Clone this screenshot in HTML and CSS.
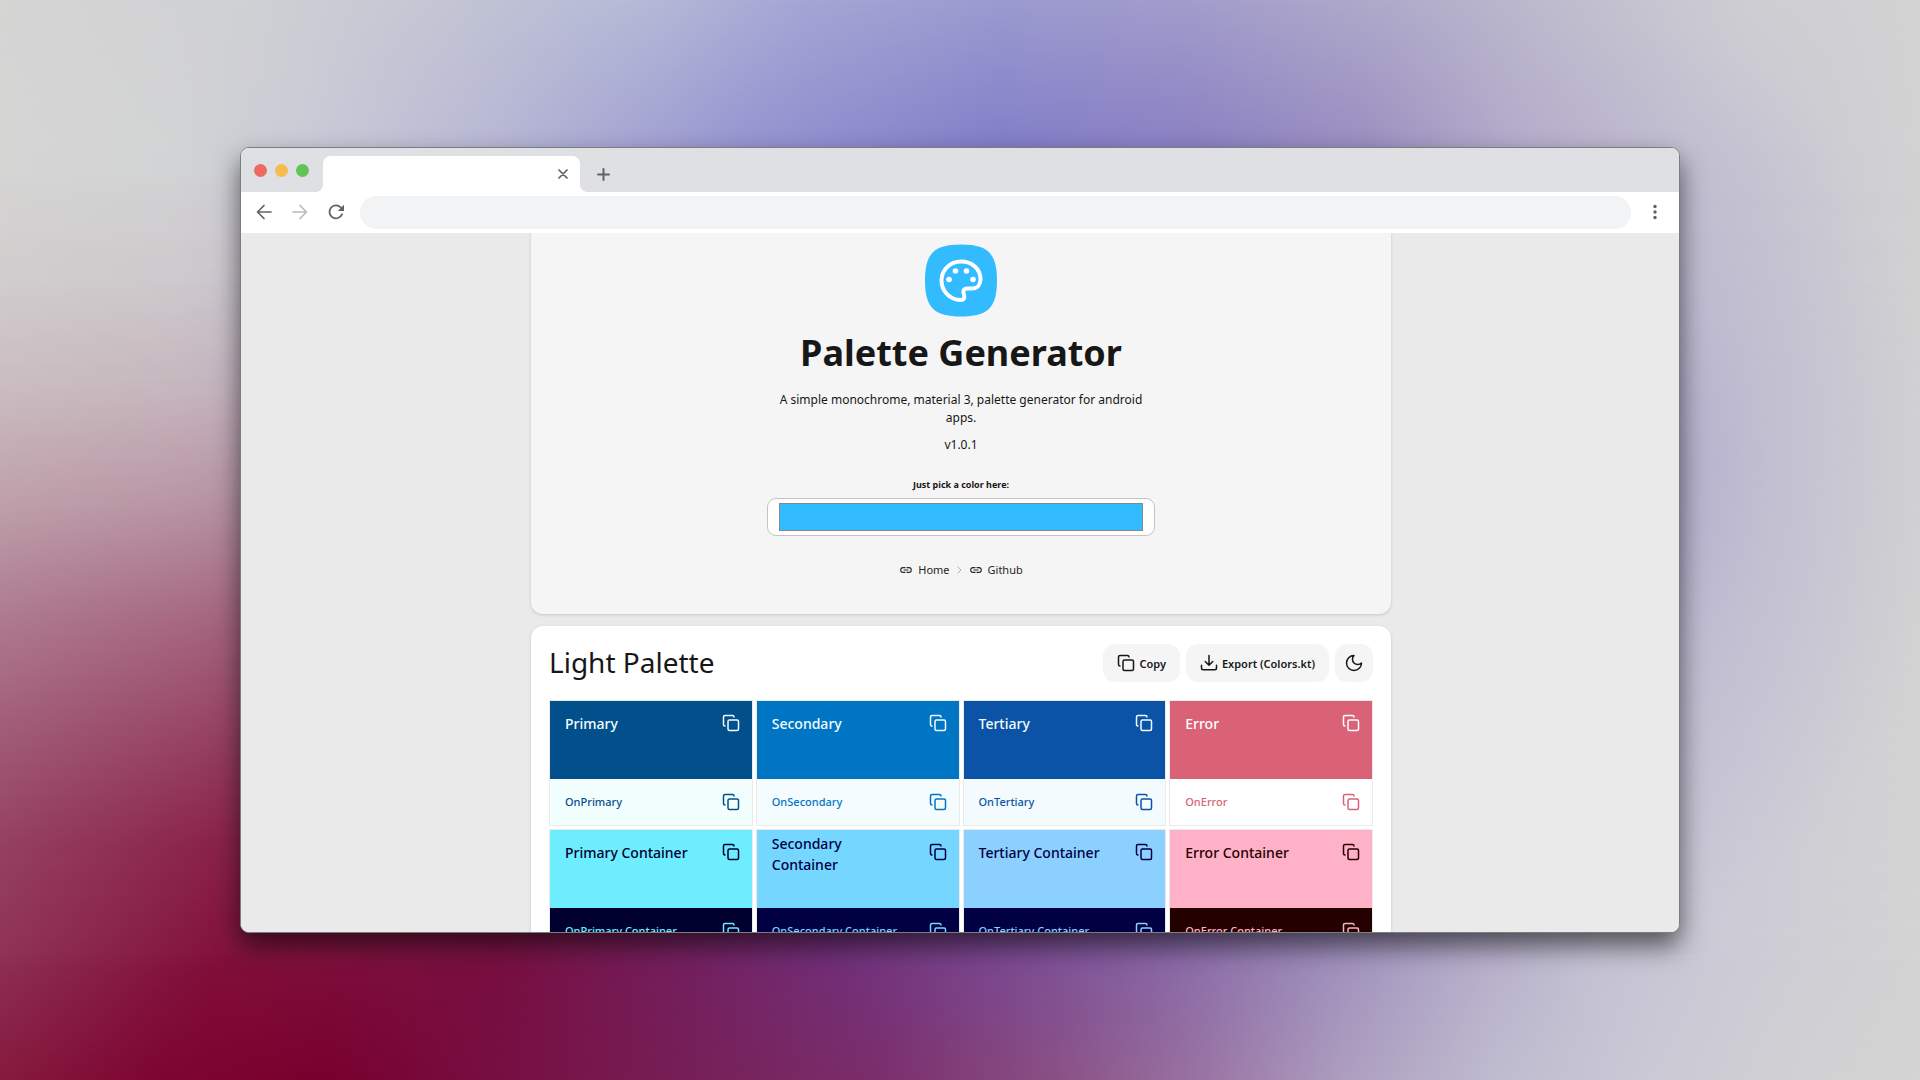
FILE: index.html
```html
<!DOCTYPE html>
<html lang="en">
<head>
<meta charset="utf-8">
<title>Palette Generator</title>
<link rel="stylesheet" href="styles.css">
</head>
<body>
<svg class="symbols" aria-hidden="true">
  <symbol id="copy" viewBox="0 0 24 24"><rect x="8" y="8" width="14" height="14" rx="2"/><path d="M4 16c-1.1 0-2-.9-2-2V4c0-1.1.9-2 2-2h10c1.1 0 2 .9 2 2"/></symbol>
  <symbol id="link" viewBox="0 0 24 24"><path fill="currentColor" d="M3.900 12c0-1.710 1.390-3.100 3.100-3.100h4V7H7a5 5 0 0 0 0 10h4v-1.900H7c-1.710 0-3.100-1.390-3.100-3.100zM8 13h8v-2H8v2zm9-6h-4v1.900h4c1.710 0 3.100 1.390 3.100 3.100s-1.390 3.100-3.100 3.100h-4V17h4a5 5 0 0 0 0-10z"/></symbol>
</svg>
<div class="window">
  <div class="tabstrip">
    <div class="lights"><span class="light red"></span><span class="light amber"></span><span class="light green"></span></div>
    <div class="tab">
      <button class="icon-button" aria-label="Close tab"><svg class="stroke" width="10" height="10" viewBox="0 0 10 10"><path d="M1 1l8 8M9 1L1 9" stroke-width="1.7"/></svg></button>
    </div>
    <button class="icon-button new-tab" aria-label="New tab"><svg class="stroke" width="13" height="13" viewBox="0 0 13 13"><path d="M6.500 1v11M1 6.500h11" stroke-width="2"/></svg></button>
  </div>
  <div class="toolbar">
    <button class="icon-button" aria-label="Back"><svg class="stroke" width="16" height="16" viewBox="0 0 16 16"><path d="M15 8H2M8 1.500L1.500 8 8 14.500" stroke-width="1.7"/></svg></button>
    <button class="icon-button" aria-label="Forward" disabled><svg class="stroke" width="16" height="16" viewBox="0 0 16 16"><path d="M1 8h13M8 1.500L14.500 8 8 14.500" stroke-width="1.7"/></svg></button>
    <button class="icon-button" aria-label="Reload"><svg class="stroke" width="16" height="16" viewBox="0 0 16 16"><path d="M14 10.300A6.500 6.500 0 1 1 12.800 3.500L14 5" stroke-width="1.8"/><path class="solid" d="M16 .8V7H9.800z"/></svg></button>
    <input class="address" type="text" aria-label="Address">
    <button class="icon-button" aria-label="Menu"><svg width="4" height="16" viewBox="0 0 4 16"><g fill="currentColor"><circle cx="2" cy="2.500" r="1.700"/><circle cx="2" cy="8" r="1.700"/><circle cx="2" cy="13.500" r="1.700"/></g></svg></button>
  </div>
  <main class="page">
    <header class="hero">
      <svg class="logo" viewBox="0 0 72 72" aria-hidden="true">
        <path class="logo-shape" d="M36 0C62 0 72 8 72 36S62 72 36 72 0 64 0 36 10 0 36 0z"/>
        <path class="logo-line" d="M36 17C25 17 16.500 25.500 16.500 36S25 55.500 35.500 55.500c3.500 0 4.500-2 3.500-5-1.500-4-.5-6.500 3.500-6.500h5c5 0 8-4 8-9.500C55.500 24.500 47 17 36 17z"/>
        <g class="logo-dots"><circle cx="24" cy="35" r="2.800"/><circle cx="30.500" cy="26.500" r="2.800"/><circle cx="41.500" cy="26.500" r="2.800"/><circle cx="48" cy="35" r="2.800"/></g>
      </svg>
      <h1>Palette Generator</h1>
      <p class="lead">A simple monochrome, material 3, palette generator for android apps.</p>
      <p class="version">v1.0.1</p>
      <div class="picker">
        <label for="color">Just pick a color here:</label>
        <input id="color" type="color" value="#33bbff">
      </div>
      <nav class="links">
        <a href="#home"><svg width="14" height="14"><use href="#link"/></svg>Home</a>
        <svg class="stroke chevron" width="5" height="8" viewBox="0 0 5 8"><path d="M1 1l3 3-3 3"/></svg>
        <a href="#github"><svg width="14" height="14"><use href="#link"/></svg>Github</a>
      </nav>
    </header>
    <section class="card">
      <div class="card-head">
        <h2>Light Palette</h2>
        <div class="actions">
          <button class="action"><svg class="stroke" width="18" height="18"><use href="#copy" stroke-width="2"/></svg>Copy</button>
          <button class="action"><svg class="stroke" width="18" height="18" viewBox="0 0 24 24"><path stroke-width="2" d="M22 15v4a2 2 0 0 1-2 2H4a2 2 0 0 1-2-2v-4M7 10l5 5 5-5M12 15V2"/></svg>Export (Colors.kt)</button>
          <button class="action square" aria-label="Dark palette"><svg class="stroke" width="18" height="18" viewBox="0 0 24 24"><path stroke-width="2" d="M12 2a7 7 0 0 0 10 10A10 10 0 1 1 12 2z"/></svg></button>
        </div>
      </div>
      <div class="swatches">
        <div class="swatch primary"><div class="main"><span>Primary</span><button aria-label="Copy Primary"><svg class="stroke" width="18" height="18"><use href="#copy"/></svg></button></div><div class="on"><span>OnPrimary</span><button aria-label="Copy OnPrimary"><svg class="stroke" width="18" height="18"><use href="#copy"/></svg></button></div></div>
        <div class="swatch secondary"><div class="main"><span>Secondary</span><button aria-label="Copy Secondary"><svg class="stroke" width="18" height="18"><use href="#copy"/></svg></button></div><div class="on"><span>OnSecondary</span><button aria-label="Copy OnSecondary"><svg class="stroke" width="18" height="18"><use href="#copy"/></svg></button></div></div>
        <div class="swatch tertiary"><div class="main"><span>Tertiary</span><button aria-label="Copy Tertiary"><svg class="stroke" width="18" height="18"><use href="#copy"/></svg></button></div><div class="on"><span>OnTertiary</span><button aria-label="Copy OnTertiary"><svg class="stroke" width="18" height="18"><use href="#copy"/></svg></button></div></div>
        <div class="swatch error"><div class="main"><span>Error</span><button aria-label="Copy Error"><svg class="stroke" width="18" height="18"><use href="#copy"/></svg></button></div><div class="on"><span>OnError</span><button aria-label="Copy OnError"><svg class="stroke" width="18" height="18"><use href="#copy"/></svg></button></div></div>
        <div class="swatch primary-container"><div class="main"><span>Primary Container</span><button aria-label="Copy Primary Container"><svg class="stroke" width="18" height="18"><use href="#copy"/></svg></button></div><div class="on"><span>OnPrimary Container</span><button aria-label="Copy OnPrimary Container"><svg class="stroke" width="18" height="18"><use href="#copy"/></svg></button></div></div>
        <div class="swatch secondary-container"><div class="main"><span>Secondary Container</span><button aria-label="Copy Secondary Container"><svg class="stroke" width="18" height="18"><use href="#copy"/></svg></button></div><div class="on"><span>OnSecondary Container</span><button aria-label="Copy OnSecondary Container"><svg class="stroke" width="18" height="18"><use href="#copy"/></svg></button></div></div>
        <div class="swatch tertiary-container"><div class="main"><span>Tertiary Container</span><button aria-label="Copy Tertiary Container"><svg class="stroke" width="18" height="18"><use href="#copy"/></svg></button></div><div class="on"><span>OnTertiary Container</span><button aria-label="Copy OnTertiary Container"><svg class="stroke" width="18" height="18"><use href="#copy"/></svg></button></div></div>
        <div class="swatch error-container"><div class="main"><span>Error Container</span><button aria-label="Copy Error Container"><svg class="stroke" width="18" height="18"><use href="#copy"/></svg></button></div><div class="on"><span>OnError Container</span><button aria-label="Copy OnError Container"><svg class="stroke" width="18" height="18"><use href="#copy"/></svg></button></div></div>
      </div>
    </section>
  </main>
</div>
<div class="backdrop" aria-hidden="true"><div class="layer upper"></div><div class="layer lower"></div><div class="layer floor"></div><div class="layer glow"></div></div>
</body>
</html>
```
FILE: styles.css
```css
* { box-sizing: border-box; }

body {
  margin: 0;
  height: 100vh;
  padding: 147px 0;
  overflow: hidden;
  font-family: "Noto Sans", sans-serif;
  color: #171717;
}

button, input { font: inherit; color: inherit; }
button { border: 0; padding: 0; background: none; display: flex; align-items: center; justify-content: center; }
h1, h2, p { margin: 0; }
svg { display: block; flex: none; }
.symbols { position: absolute; width: 0; height: 0; }
.stroke { fill: none; stroke: currentColor; stroke-linecap: round; stroke-linejoin: round; }
.solid { fill: currentColor; stroke: none; }

/* Colour wash behind the window */
.backdrop, .layer { position: absolute; inset: 0; z-index: -1; }
.backdrop {
  background: linear-gradient(90deg, #d5d5d4 0%, #d0d1d4 13%, #c4c6d4 23%, #b4b9d7 34%, #a3a6d4 42%, #9b9bd0 52%, #a29dcb 62%, #b1acca 73%, #c2c0cf 83%, #cfced3 91%, #d3d3d3 100%);
  isolation: isolate;
}
.upper {
  background: linear-gradient(90deg, #d5d5d4 0%, #d2d3d4 9%, #c9cad6 16%, #b6b6d4 26%, #9593d0 39%, #817dc8 52%, #8a80c2 62%, #9a8ec0 71%, #b3abc9 79%, #c5c2d1 88%, #cfcfd3 97%, #d2d2d3 100%);
  mask-image: linear-gradient(transparent, #000 14%);
}
.lower {
  background: linear-gradient(90deg, #8e3155 0%, #821039 11%, #780f40 26%, #732060 36%, #71307a 44%, #7a4890 52%, #8663a3 60%, #9a88b8 68%, #b2aac8 76%, #c4c2d3 83%, #cdccd6 91%, #d3d3d3 100%);
  mask-image: linear-gradient(transparent 16%, rgba(0,0,0,.05) 26%, rgba(0,0,0,.15) 36%, rgba(0,0,0,.33) 47%, rgba(0,0,0,.55) 57%, rgba(0,0,0,.74) 68%, rgba(0,0,0,.9) 78%, #000 90%);
}
.floor {
  background: linear-gradient(90deg, #861a3e 0%, #7c0630 8%, #78002e 17%, #770f42 26%, #762057 36%, #7b2f6c 46%, #8a5085 55%, #9a76a5 63%, #ad9ebf 70%, #bfbccf 78%, #cac9d5 86%, #d1d1d3 94%, #d3d3d3 100%);
  mask-image: linear-gradient(transparent 88%, #000);
}
.glow { background: radial-gradient(ellipse 16% 42% at 85% 44%, rgba(166,156,200,.6), rgba(178,172,206,.34) 45%, rgba(195,195,215,0) 100%); }

/* Browser window */
.window {
  width: 75%;
  height: 100%;
  margin: 0 auto;
  display: flex;
  flex-direction: column;
  overflow: hidden;
  border: 1px solid #7c7d80;
  border-radius: 9px;
  background: #fff;
  box-shadow: 0 13px 26px rgba(0,0,0,.58);
}
.icon-button { width: 24px; height: 24px; color: #5f6368; }
.icon-button:disabled { color: #b9bbbe; }
.tabstrip { display: flex; align-items: flex-end; height: 44px; flex: none; padding-left: 13px; background: #dee0e3; }
.lights { display: flex; gap: 8px; margin: 0 14px 15px 0; }
.light { width: 13px; height: 13px; border-radius: 50%; }
.red { background: #ee6a5e; }
.amber { background: #f5bd4f; }
.green { background: #61c454; }
.tab {
  position: relative;
  display: flex;
  align-items: center;
  justify-content: flex-end;
  width: 257px;
  height: 36px;
  padding-right: 5px;
  border-radius: 8px 8px 0 0;
  background: #fff;
}
.tab::before, .tab::after { content: ""; position: absolute; bottom: 0; width: 8px; height: 8px; }
.tab::before { right: 100%; background: radial-gradient(circle at 0 0, transparent 8px, #fff 8px); }
.tab::after { left: 100%; background: radial-gradient(circle at 100% 0, transparent 8px, #fff 8px); }
.new-tab { margin: 0 0 6px 11px; }
.toolbar { display: flex; align-items: center; gap: 12px; height: 41px; flex: none; padding: 0 12px 1px 11px; }
.address { flex: 1; min-width: 0; height: 33px; padding: 0 16px; border: 0; border-radius: 17px; background: #f1f3f4; }

/* Page */
.page { flex: 1; min-height: 0; overflow: hidden; padding-left: 2px; background: #eaeaea; }
.hero, .card { max-width: 860px; margin: 0 auto; box-shadow: 0 1px 3px rgba(0,0,0,.16); }
.hero {
  display: flex;
  flex-direction: column;
  align-items: center;
  padding: 11px 18px 35px;
  border-radius: 0 0 12px 12px;
  background: #f5f5f5;
  text-align: center;
}
.logo { width: 72px; height: 73px; }
.logo-shape { fill: #33bbff; }
.logo-line { fill: none; stroke: #fff; stroke-width: 4; stroke-linejoin: round; }
.logo-dots { fill: #fff; }
h1 { margin-top: 12px; font-size: 36px; line-height: 48px; font-weight: 700; }
.lead, .version { max-width: 388px; font-size: 12px; line-height: 18px; }
.lead { margin-top: 14px; }
.version { margin-top: 9px; }
.picker { display: flex; flex-direction: column; width: 100%; max-width: 388px; margin-top: 18px; }
.picker label { padding: 6px 0; font-size: 9px; line-height: 14px; font-weight: 700; }
.picker input { width: 100%; height: 38px; padding: 0; border: 1px solid #c4c4c4; border-radius: 9px; background: #fff; }
.picker input::-webkit-color-swatch-wrapper { padding: 4px 11px; }
.picker input::-webkit-color-swatch { border: 1px solid #7d8a92; border-radius: 0; }
.links { display: flex; align-items: center; gap: 7px; margin-top: 25px; font-size: 11px; line-height: 18px; }
.links a { display: flex; align-items: center; gap: 5px; color: #262626; text-decoration: none; }
.chevron { color: #b0b0b0; }

.card { margin-top: 12px; padding: 18px; border-radius: 12px; background: #fff; }
.card-head { display: flex; align-items: center; justify-content: space-between; margin-bottom: 18px; }
h2 { font-size: 28px; line-height: 36px; font-weight: 400; padding-bottom: 2px; }
.actions { display: flex; gap: 6px; }
.action { gap: 4px; height: 38px; padding: 0 14px; border-radius: 12px; background: #f5f5f5; font-size: 11px; font-weight: 600; }
.square { width: 38px; padding: 0; }

.swatches { display: grid; grid-template-columns: repeat(4, 1fr); gap: 3px; }
.swatch { border: 1px solid rgba(0,0,0,.08); background-clip: padding-box; }
.main, .on { display: flex; align-items: flex-start; justify-content: space-between; gap: 12px; padding: 3px 2px 0 15px; }
.main { height: 78px; font-size: 14px; line-height: 21px; font-weight: 500; }
.on { height: 46px; padding-top: 4px; font-size: 11px; line-height: 18px; font-weight: 500; }
.main span, .on span { display: flex; align-items: center; min-height: 38px; }
.swatch button { width: 38px; height: 38px; flex: none; stroke-width: 2; }

.primary .main { background: #014f8b; color: #f3ffff; }
.primary .on { background: #f3ffff; color: #014f8b; }
.secondary .main { background: #0075c4; color: #f4fcff; }
.secondary .on { background: #f4fcff; color: #0075c4; }
.tertiary .main { background: #0a53a6; color: #f3fbff; }
.tertiary .on { background: #f3fbff; color: #0a53a6; }
.error .main { background: #d96277; color: #fff; }
.error .on { background: #fff; color: #d96277; }
.primary-container .main { background: #6eedff; color: #00002e; }
.primary-container .on { background: #00002e; color: #6eedff; }
.secondary-container .main { background: #75d6ff; color: #000043; }
.secondary-container .on { background: #000043; color: #75d6ff; }
.tertiary-container .main { background: #8cd0ff; color: #000043; }
.tertiary-container .on { background: #000043; color: #8cd0ff; }
.error-container .main { background: #ffb1c7; color: #240000; }
.error-container .on { background: #240000; color: #ffb1c7; }
```
